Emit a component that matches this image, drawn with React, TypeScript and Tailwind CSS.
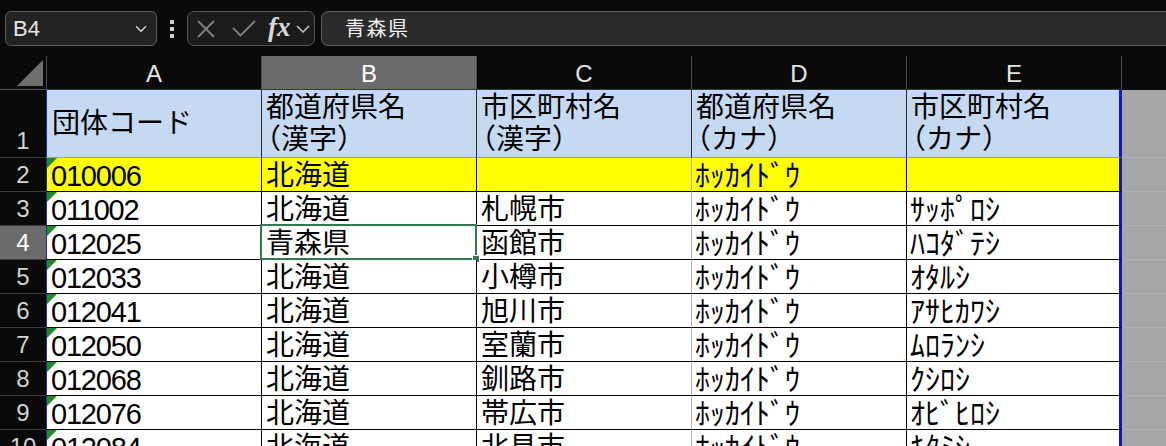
import { ChevronDown } from "lucide-react";

type Row = { num: number; code: string; pref: string; city: string; prefKana: string; cityKana: string };

const rows: Row[] = [
  { num: 2, code: "010006", pref: "北海道", city: "", prefKana: "ﾎｯｶｲﾄﾞｳ", cityKana: "" },
  { num: 3, code: "011002", pref: "北海道", city: "札幌市", prefKana: "ﾎｯｶｲﾄﾞｳ", cityKana: "ｻｯﾎﾟﾛｼ" },
  { num: 4, code: "012025", pref: "青森県", city: "函館市", prefKana: "ﾎｯｶｲﾄﾞｳ", cityKana: "ﾊｺﾀﾞﾃｼ" },
  { num: 5, code: "012033", pref: "北海道", city: "小樽市", prefKana: "ﾎｯｶｲﾄﾞｳ", cityKana: "ｵﾀﾙｼ" },
  { num: 6, code: "012041", pref: "北海道", city: "旭川市", prefKana: "ﾎｯｶｲﾄﾞｳ", cityKana: "ｱｻﾋｶﾜｼ" },
  { num: 7, code: "012050", pref: "北海道", city: "室蘭市", prefKana: "ﾎｯｶｲﾄﾞｳ", cityKana: "ﾑﾛﾗﾝｼ" },
  { num: 8, code: "012068", pref: "北海道", city: "釧路市", prefKana: "ﾎｯｶｲﾄﾞｳ", cityKana: "ｸｼﾛｼ" },
  { num: 9, code: "012076", pref: "北海道", city: "帯広市", prefKana: "ﾎｯｶｲﾄﾞｳ", cityKana: "ｵﾋﾞﾋﾛｼ" },
  { num: 10, code: "012084", pref: "北海道", city: "北見市", prefKana: "ﾎｯｶｲﾄﾞｳ", cityKana: "ｷﾀﾐｼ" },
];

const FormulaBar = () => (
  <div className="h-[56px] flex items-start pt-[11px] pl-[5px]">
    {/* name box */}
    <div className="w-[152px] h-[35px] shrink-0 rounded-[6px] border border-[#5c5c5c] bg-[#232323] flex items-center pl-[7px] pr-[6px]">
      <span className="flex-1 text-[22px] text-[#e6e6e6] leading-none">B4</span>
      <ChevronDown size={18} strokeWidth={2} className="text-[#d8d8d8]" />
    </div>

    {/* splitter dots */}
    <div className="w-[30px] h-[35px] shrink-0 flex flex-col items-center justify-center gap-[3px]">
      <span className="w-[4px] h-[4px] bg-[#d0d0d0]" />
      <span className="w-[4px] h-[4px] bg-[#d0d0d0]" />
      <span className="w-[4px] h-[4px] bg-[#d0d0d0]" />
    </div>

    {/* cancel / enter / insert function */}
    <div className="w-[128px] h-[35px] shrink-0 rounded-[7px] border border-[#555] bg-[#1c1c1c] flex items-center pl-[9px]">
      <svg width="18" height="18" viewBox="0 0 18 18" className="shrink-0">
        <path d="M1 1 L17 17 M17 1 L1 17" stroke="#808080" strokeWidth="1.8" fill="none" />
      </svg>
      <svg width="24" height="17" viewBox="0 0 24 17" className="ml-[17px] shrink-0">
        <path d="M1 8 L8.5 15.5 L23 1" stroke="#808080" strokeWidth="1.8" fill="none" />
      </svg>
      <span className="ml-[12px] text-[27px] italic font-bold font-['Liberation_Serif',serif] text-[#d8d8d8] leading-none -mt-[3px]">
        fx
      </span>
      <svg width="14" height="8" viewBox="0 0 14 8" className="ml-[5px] shrink-0">
        <path d="M1 1 L7 7 L13 1" stroke="#bdbdbd" strokeWidth="1.6" fill="none" />
      </svg>
    </div>

    {/* formula input */}
    <div className="ml-[6px] -mr-[12px] flex-1 h-[35px] rounded-l-[7px] border border-[#606060] bg-[#2b2b2b] flex items-center pl-[23px]">
      <span className="text-[20px] tracking-[1.5px] text-[#f2f2f2] leading-none">青森県</span>
    </div>
  </div>
);

const ColumnHeaders = () => (
  <div className="h-[34px] flex">
    <div className="w-[47px] shrink-0 border-r border-b border-r-[#4a4a4a] border-b-[#5a5a5a] flex items-center justify-end pr-[3px]">
      <svg width="26" height="26" viewBox="0 0 26 26">
        <path d="M26 0 L26 26 L0 26 Z" fill="#6f6f6f" />
      </svg>
    </div>
    {["A", "B", "C", "D", "E"].map((c) => (
      <div
        key={c}
        className={
          "w-[215px] shrink-0 border-r border-b border-r-[#4a4a4a] border-b-[#2a2aa0] flex items-center justify-center pt-[3px] text-[24px] " +
          (c === "B" ? "bg-[#6b6b6b] text-white" : "text-[#e4e4e4]")
        }
      >
        {c}
      </div>
    ))}
    <div className="flex-1" />
  </div>
);

const RowHeader = ({ n, h, active }: { n: number; h: string; active?: boolean }) => (
  <div
    className={
      "w-[46px] shrink-0 border-b border-[#3c3c3c] flex items-end justify-center pb-[2px] text-[24px] leading-[28px] " +
      h +
      (active ? " bg-[#6b6b6b] text-white" : " text-[#d2d2d2]")
    }
  >
    {n}
  </div>
);

const HeaderRow = () => (
  <div className="flex h-[68px] bg-[#0a0a0a]">
    <RowHeader n={1} h="h-[68px]" />
    <div className="w-[216px] shrink-0 bg-[#c5d9f1] border-l border-r border-b border-l-[#2a2aa0] border-r-[#2b2b2b] border-b-[#9c9c9c] flex items-center pl-[5px] text-[28px] leading-[32px]">
      団体コード
    </div>
    {[
      ["都道府県名", "（漢字）"],
      ["市区町村名", "（漢字）"],
      ["都道府県名", "（カナ）"],
      ["市区町村名", "（カナ）"],
    ].map(([a, b], i) => (
      <div
        key={i}
        className={
          "w-[215px] shrink-0 bg-[#c5d9f1] border-b border-b-[#9c9c9c] flex flex-col justify-center pl-[4px] text-[28px] leading-[32px] " +
          (i === 3 ? "border-r-[3px] border-r-[#1414c4]" : "border-r border-r-[#2b2b2b]")
        }
      >
        <span>{a}</span>
        <span className="-ml-[13px]">{b}</span>
      </div>
    ))}
    <div className="flex-1 bg-[#a6a6a6] border-b border-[#b0b0b0]" />
  </div>
);

const DataRow = ({ row }: { row: Row }) => {
  const bg = row.num === 2 ? "bg-[#ffff00]" : "bg-white";
  const cell = "h-[34px] shrink-0 border-b border-b-black flex items-center pt-[3px] leading-[30px] " + bg;
  const selected = row.num === 4;
  return (
    <div className="flex h-[34px] bg-[#0a0a0a]">
      <RowHeader n={row.num} h="h-[34px]" active={selected} />
      <div className={cell + " relative w-[216px] border-l border-r border-l-[#2a2aa0] border-r-black pl-[4px] text-[29px] tracking-[-1.2px]"}>
        <span className="absolute top-0 left-0 w-0 h-0 border-t-[10px] border-r-[10px] border-t-[#1f8c1f] border-r-transparent" />
        {row.code}
      </div>
      <div className={cell + " relative w-[215px] border-r border-r-black pl-[4px] text-[28px]"}>
        {row.pref}
        {selected && (
          <>
            <span className="absolute -left-[2px] -top-[2px] -right-[1px] -bottom-[1px] border-2 border-[#2f7a4e]" />
            <span className="absolute -right-[3px] -bottom-[3px] w-[6px] h-[6px] bg-[#2f7a4e] outline outline-1 outline-white" />
          </>
        )}
      </div>
      <div className={cell + " w-[215px] border-r border-r-[#b4b4b4] pl-[4px] text-[28px]"}>{row.city}</div>
      <div className={cell + " w-[215px] border-r border-r-black pl-[3px] text-[30px]"}>{row.prefKana}</div>
      <div className={cell + " w-[215px] border-r-[3px] border-r-[#1414c4] pl-[3px] text-[30px]"}>{row.cityKana}</div>
      <div className="flex-1 h-[34px] bg-[#a6a6a6] border-b border-[#b0b0b0]" />
    </div>
  );
};

export default function App() {
  return (
    <div className="w-[1166px] h-[446px] overflow-hidden bg-[#0a0a0a] text-black font-['Liberation_Sans','Noto_Sans_CJK_JP',sans-serif]">
      <FormulaBar />
      <ColumnHeaders />
      <HeaderRow />
      {rows.map((r) => (
        <DataRow key={r.num} row={r} />
      ))}
    </div>
  );
}
